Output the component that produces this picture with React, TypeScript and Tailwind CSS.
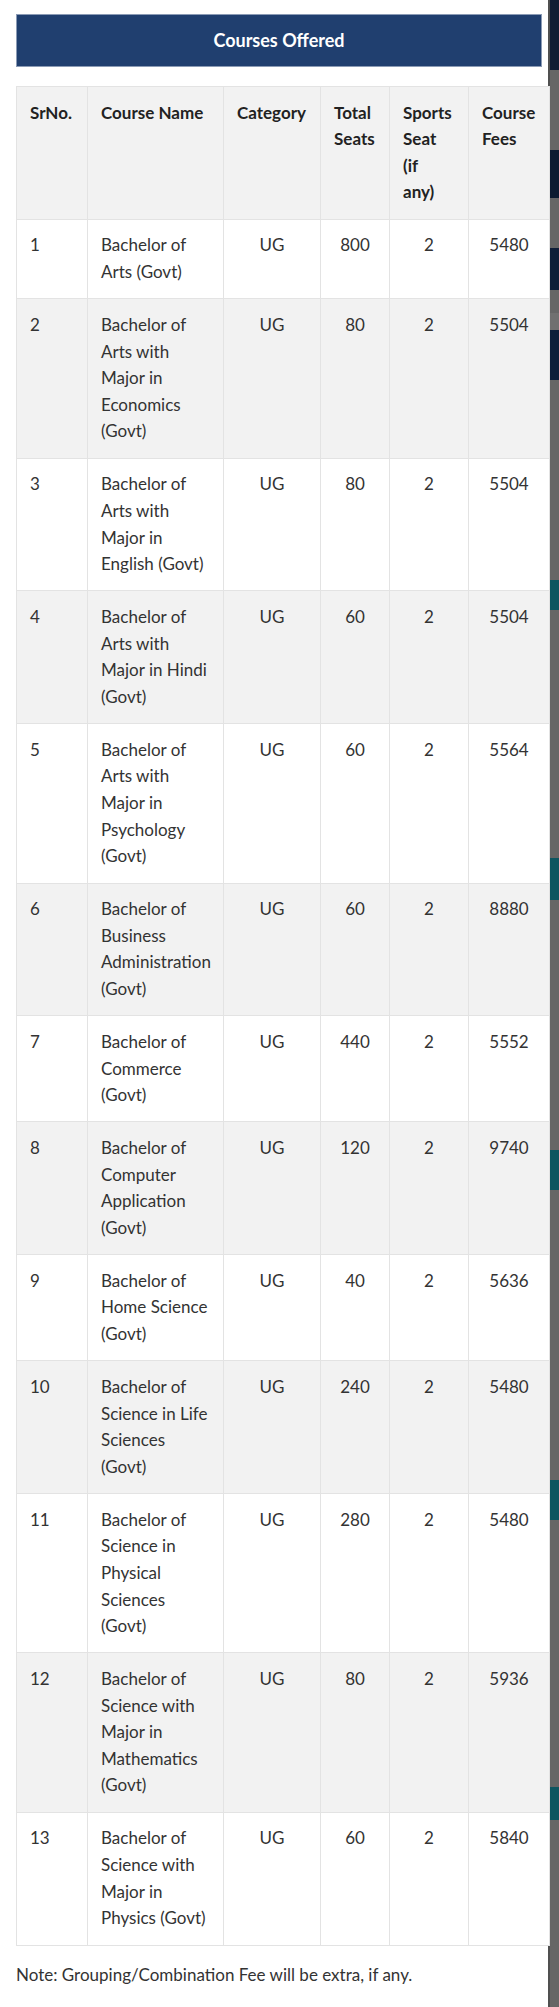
import React from "react";

type Course = {
    no: number;
    name: string[];
    category: string;
    seats: number;
    sports: number;
    fee: number;
};

const courses: Course[] = [
    { no: 1, name: ["Bachelor of", "Arts (Govt)"], category: "UG", seats: 800, sports: 2, fee: 5480 },
    { no: 2, name: ["Bachelor of", "Arts with", "Major in", "Economics", "(Govt)"], category: "UG", seats: 80, sports: 2, fee: 5504 },
    { no: 3, name: ["Bachelor of", "Arts with", "Major in", "English (Govt)"], category: "UG", seats: 80, sports: 2, fee: 5504 },
    { no: 4, name: ["Bachelor of", "Arts with", "Major in Hindi", "(Govt)"], category: "UG", seats: 60, sports: 2, fee: 5504 },
    { no: 5, name: ["Bachelor of", "Arts with", "Major in", "Psychology", "(Govt)"], category: "UG", seats: 60, sports: 2, fee: 5564 },
    { no: 6, name: ["Bachelor of", "Business", "Administration", "(Govt)"], category: "UG", seats: 60, sports: 2, fee: 8880 },
    { no: 7, name: ["Bachelor of", "Commerce", "(Govt)"], category: "UG", seats: 440, sports: 2, fee: 5552 },
    { no: 8, name: ["Bachelor of", "Computer", "Application", "(Govt)"], category: "UG", seats: 120, sports: 2, fee: 9740 },
    { no: 9, name: ["Bachelor of", "Home Science", "(Govt)"], category: "UG", seats: 40, sports: 2, fee: 5636 },
    { no: 10, name: ["Bachelor of", "Science in Life", "Sciences", "(Govt)"], category: "UG", seats: 240, sports: 2, fee: 5480 },
    { no: 11, name: ["Bachelor of", "Science in", "Physical", "Sciences", "(Govt)"], category: "UG", seats: 280, sports: 2, fee: 5480 },
    { no: 12, name: ["Bachelor of", "Science with", "Major in", "Mathematics", "(Govt)"], category: "UG", seats: 80, sports: 2, fee: 5936 },
    { no: 13, name: ["Bachelor of", "Science with", "Major in", "Physics (Govt)"], category: "UG", seats: 60, sports: 2, fee: 5840 },
];

const headers: string[][] = [
    ["SrNo."],
    ["Course Name"],
    ["Category"],
    ["Total", "Seats"],
    ["Sports", "Seat", "(if", "any)"],
    ["Course", "Fees"],
];

// the page behind the modal, only a thin strip of it shows on the right
const backdrop: { h: number; c: string }[] = [
    { h: 70, c: "bg-[#101d33]" },
    { h: 80, c: "bg-[#666666]" },
    { h: 48, c: "bg-[#0d1b31]" },
    { h: 50, c: "bg-[#666666]" },
    { h: 42, c: "bg-[#0e1e38]" },
    { h: 23, c: "bg-[#666666]" },
    { h: 17, c: "bg-[#707070]" },
    { h: 50, c: "bg-[#0d1e3a]" },
    { h: 200, c: "bg-[#666666]" },
    { h: 30, c: "bg-[#0d5560]" },
    { h: 248, c: "bg-[#666666]" },
    { h: 42, c: "bg-[#0d5560]" },
    { h: 250, c: "bg-[#666666]" },
    { h: 40, c: "bg-[#0d5560]" },
    { h: 290, c: "bg-[#666666]" },
    { h: 40, c: "bg-[#0d5560]" },
    { h: 267, c: "bg-[#666666]" },
    { h: 33, c: "bg-[#0d5560]" },
    { h: 200, c: "bg-[#666666]" },
];

const cell = "border border-[#e3e3e3] px-[13px] py-[12.7px] align-top";

export default function App() {
    return (
        <div className="flex h-[2007px] w-[559px] overflow-hidden bg-white font-['Lato',sans-serif] text-[17px] leading-[26.6px] text-[#333333]">
            {/* modal */}
            <div className="relative z-10 w-[548px] shrink-0 bg-white pt-[14px] pl-4 pr-[6px]">
                <div className="flex h-[53px] w-[526px] items-center justify-center border border-[#8b9bb5] bg-[#203f6f]">
                    <h2 className="text-[18px] font-bold text-white">Courses Offered</h2>
                </div>

                <table className="mt-[19px] w-[533px] table-fixed border-collapse">
                    <colgroup>
                        <col className="w-[71px]" />
                        <col className="w-[136px]" />
                        <col className="w-[97px]" />
                        <col className="w-[69px]" />
                        <col className="w-[79px]" />
                        <col className="w-[81px]" />
                    </colgroup>
                    <thead>
                        <tr className="bg-[#f2f2f2]">
                            {headers.map((lines, i) => (
                                <th key={i} className={`${cell} text-left font-bold text-[#222222]`}>
                                    {lines.map((l) => (
                                        <span key={l} className="block whitespace-nowrap text-left">{l}</span>
                                    ))}
                                </th>
                            ))}
                        </tr>
                    </thead>
                    <tbody>
                        {courses.map((c, i) => (
                            <tr key={c.no} className={i % 2 === 1 ? "bg-[#f2f2f2]" : "bg-white"}>
                                <td className={cell}>{c.no}</td>
                                <td className={cell}>
                                    {c.name.map((l) => (
                                        <span key={l} className="block whitespace-nowrap">{l}</span>
                                    ))}
                                </td>
                                <td className={`${cell} text-center`}>{c.category}</td>
                                <td className={`${cell} text-center`}>{c.seats}</td>
                                <td className={`${cell} text-center`}>{c.sports}</td>
                                <td className={`${cell} text-center`}>{c.fee}</td>
                            </tr>
                        ))}
                    </tbody>
                </table>

                <p className="mt-4">Note: Grouping/Combination Fee will be extra, if any.</p>
            </div>

            {/* dimmed page behind */}
            <div className="flex w-[11px] shrink-0 flex-col border-l-2 border-[#505050]">
                {backdrop.map((b, i) => (
                    <div key={i} className={`${b.c} shrink-0`} style={{ height: b.h }} />
                ))}
            </div>
        </div>
    );
}
